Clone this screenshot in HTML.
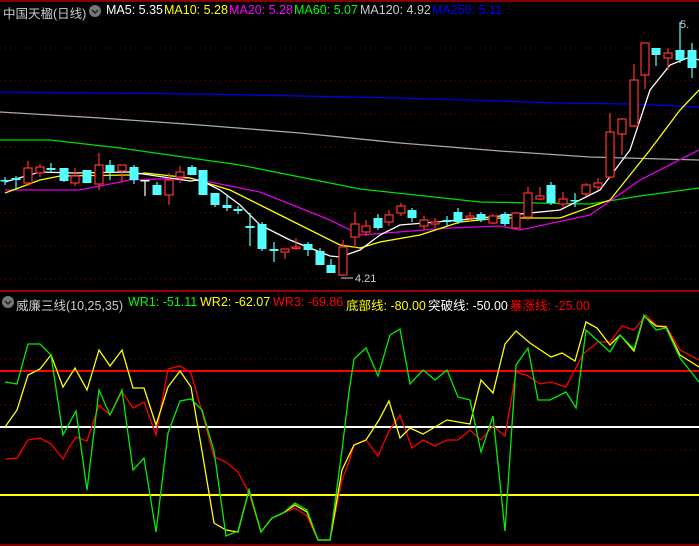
<!DOCTYPE html><html><head><meta charset="utf-8"><style>
body{margin:0;background:#000;width:699px;height:546px;overflow:hidden;font-family:"Liberation Sans","Noto Sans CJK SC",sans-serif;}
.t{position:absolute;font-size:12.5px;white-space:nowrap;top:3px;}
</style></head><body>
<svg width="699" height="546" style="position:absolute;left:0;top:0" xmlns="http://www.w3.org/2000/svg">
<line x1="0" y1="1" x2="699" y2="1" stroke="#a00" stroke-width="1.5"/>
<line x1="0" y1="291" x2="699" y2="291" stroke="#c00" stroke-width="1.5"/>
<line x1="0" y1="545" x2="699" y2="545" stroke="#a00" stroke-width="1.5"/>
<g stroke="#800" stroke-dasharray="1,4">
<line x1="0" y1="48" x2="699" y2="48"/><line x1="0" y1="81" x2="699" y2="81"/><line x1="0" y1="114" x2="699" y2="114"/><line x1="0" y1="147" x2="699" y2="147"/><line x1="0" y1="180" x2="699" y2="180"/><line x1="0" y1="213" x2="699" y2="213"/><line x1="0" y1="246" x2="699" y2="246"/><line x1="0" y1="279" x2="699" y2="279"/>
<line x1="0" y1="359" x2="699" y2="359"/><line x1="0" y1="405" x2="699" y2="405"/><line x1="0" y1="450" x2="699" y2="450"/>
</g>
<g fill="none" stroke-width="1.3">
<polyline stroke="#0000ee" points="0,92 200,94 400,98 560,103 630,104 699,107"/>
<polyline stroke="#aaa" points="0,112 100,118 200,125 300,133 400,143 500,151 590,157 699,160"/>
<polyline stroke="#00e000" points="0,140 50,140 120,148 240,165 360,189 480,202 590,204 640,196 699,188"/>
<polyline stroke="#e000e0" points="5,190 80,190 130,180 190,178 260,192 330,220 360,235 450,228 500,226 520,230 590,215 640,180 699,150"/>
<polyline stroke="#ffff00" points="5,193 40,180 60,176 130,175 145,173 190,178 230,190 280,215 340,245 360,248 380,242 420,235 460,222 500,218 560,218 610,200 650,150 680,110 699,90"/>
<polyline stroke="#fff" points="5,182 40,172 75,173 130,172 150,175 190,181 200,180 220,190 240,205 260,225 290,240 330,256 340,257 360,250 380,235 400,225 460,220 560,210 600,190 630,150 650,90 670,65 690,57 699,60"/>
</g>
<g id="c"></g>
<g fill="none" stroke-width="1.3">
<line x1="0" y1="371" x2="699" y2="371" stroke="#f00" stroke-width="2"/>
<line x1="0" y1="427" x2="699" y2="427" stroke="#fff" stroke-width="2"/>
<line x1="0" y1="495" x2="699" y2="495" stroke="#ff0" stroke-width="2"/>
<polyline stroke="#f00" points="5,459 17,458 28,440 40,438 51,444 63,459 70,446 76,437 87,441 99,405 110,415 122,392 133,408 144,402 156,435 168,369 180,366 191,373 202,412 214,457 226,462 238,472 249,493 261,532 272,518 283,513 295,508 307,516 318,540 330,540 342,480 349,462 354,445 366,440 378,456 389,431 400,415 412,448 423,440 435,446 447,440 458,440 470,430 481,440 493,426 505,436 516,372 528,376 540,384 551,382 566,387 583,354 598,342 610,342 622,326 634,330 646,315 657,326 666,326 680,350 699,360"/>
<polyline stroke="#ff0" points="5,427 17,410 28,375 40,369 51,355 63,387 75,368 87,390 99,350 110,366 122,350 133,388 144,388 156,425 168,387 180,371 191,387 202,451 214,523 226,530 238,532 249,490 261,532 272,518 283,513 295,505 307,512 318,540 330,540 342,470 354,445 366,440 379,420 389,401 400,438 410,428 423,434 435,427 447,420 470,424 481,380 493,393 505,344 516,331 530,343 551,357 562,353 575,361 586,322 597,328 610,345 620,335 634,351 644,316 656,326 666,327 680,355 699,367"/>
<polyline stroke="#0e0" points="5,382 17,384 28,344 40,344 51,355 63,435 70,422 76,411 87,490 99,390 110,415 122,390 133,470 144,458 156,532 168,433 180,401 191,399 202,410 214,451 226,536 238,531 249,490 261,532 272,518 283,513 295,503 307,510 318,540 330,540 342,450 349,392 354,359 366,348 378,376 390,335 400,329 410,384 423,370 435,380 447,370 458,397 470,400 481,452 493,416 505,531 516,365 528,348 538,400 550,400 566,392 576,408 586,330 610,352 620,335 634,349 644,315 656,330 666,328 680,358 699,382"/>
</g>
<text x="355" y="282" fill="#ccc" font-size="11" font-family="Liberation Sans">4.21</text>
<line x1="341" y1="278" x2="353" y2="278" stroke="#ccc"/>
<text x="680" y="28" fill="#ccc" font-size="11" font-family="Liberation Sans">5.</text>
<circle cx="95" cy="11" r="6" fill="#777"/><path d="M92,10 l3,3 l3,-3" stroke="#222" fill="none" stroke-width="1.5"/>
<circle cx="8" cy="302" r="6" fill="#777"/><path d="M5,301 l3,3 l3,-3" stroke="#222" fill="none" stroke-width="1.5"/>
</svg>
<div class="t" style="left:3px;color:#ccc">中国天楹(日线)</div>
<div class="t" style="left:106px;color:#fff">MA5: 5.35</div>
<div class="t" style="left:164px;color:#ff0">MA10: 5.28</div>
<div class="t" style="left:229px;color:#f0f">MA20: 5.28</div>
<div class="t" style="left:294px;color:#0f0">MA60: 5.07</div>
<div class="t" style="left:360px;color:#ccc">MA120: 4.92</div>
<div class="t" style="left:432px;color:#00f">MA250: 5.11</div>
<div class="t" style="top:295px;left:16px;color:#ccc">威廉三线(10,25,35)</div>
<div class="t" style="top:295px;left:128px;color:#0f0">WR1: -51.11</div>
<div class="t" style="top:295px;left:200px;color:#ff0">WR2: -62.07</div>
<div class="t" style="top:295px;left:273px;color:#f00">WR3: -69.86</div>
<div class="t" style="top:295px;left:346px;color:#ff0">底部线: -80.00</div>
<div class="t" style="top:295px;left:428px;color:#fff">突破线: -50.00</div>
<div class="t" style="top:295px;left:510px;color:#f00">暴涨线: -25.00</div>
<script>
var d=[[5,180,181,177,185,'c'],[16,178,180,176,189,'c'],[28,168,183,161,186,'r'],[40,167,173,164,177,'r'],[51,168,170,163,172,'c'],[64,168,181,168,182,'c'],[75,176,183,168,186,'r'],[87,170,183,170,183,'c'],[99,165,184,153,190,'r'],[110,165,172,160,180,'c'],[122,165,171,165,182,'r'],[134,167,180,165,184,'c'],[145,180,181,180,196,'w'],[157,185,195,182,195,'c'],[169,180,195,173,205,'r'],[180,172,177,166,183,'r'],[192,167,175,165,175,'c'],[203,170,195,170,195,'c'],[215,193,205,193,207,'c'],[227,205,208,196,211,'c'],[238,209,211,206,214,'c'],[250,226,228,213,246,'c'],[262,224,249,222,251,'c'],[274,249,251,242,262,'c'],[285,249,252,249,259,'r'],[296,247,248,238,250,'r'],[308,244,250,242,256,'c'],[320,251,265,248,265,'c'],[331,265,273,259,273,'c'],[343,247,275,240,276,'r'],[355,224,237,212,248,'r'],[366,226,232,220,236,'r'],[378,218,228,214,230,'c'],[389,215,222,210,226,'r'],[401,206,213,203,216,'r'],[412,210,218,208,222,'c'],[424,220,226,216,230,'r'],[435,222,224,218,228,'r'],[447,220,222,216,226,'c'],[458,212,222,208,224,'c'],[470,216,218,212,222,'r'],[481,214,220,212,222,'c'],[493,216,223,214,224,'r'],[505,214,224,212,226,'c'],[516,213,228,212,229,'r'],[528,193,217,187,220,'r'],[540,196,199,187,200,'r'],[551,185,203,182,205,'c'],[563,199,204,192,207,'r'],[575,200,201,193,207,'c'],[586,185,194,183,196,'r'],[598,183,187,178,190,'r'],[610,132,177,113,178,'r'],[622,119,134,118,155,'r'],[634,80,126,64,127,'r'],[645,43,75,43,89,'r'],[656,48,55,48,66,'c'],[668,53,58,48,70,'r'],[680,50,60,22,63,'c'],[692,50,68,43,78,'c']];
var s='';d.forEach(function(a){var x=a[0],col=a[5]=='r'?'#ff3333':(a[5]=='w'?'#fff':'#55ffff');
s+='<line x1="'+x+'" y1="'+a[3]+'" x2="'+x+'" y2="'+a[4]+'" stroke="'+col+'" stroke-width="1.2"/>';
var h=Math.max(a[2]-a[1],1.5);
if(a[5]=='r')s+='<rect x="'+(x-4)+'" y="'+a[1]+'" width="8" height="'+h+'" fill="#000" stroke="'+col+'" stroke-width="1.2"/>';
else s+='<rect x="'+(x-4.5)+'" y="'+a[1]+'" width="9" height="'+h+'" fill="'+col+'"/>';});
document.getElementById('c').innerHTML=s;
</script>
</body></html>
